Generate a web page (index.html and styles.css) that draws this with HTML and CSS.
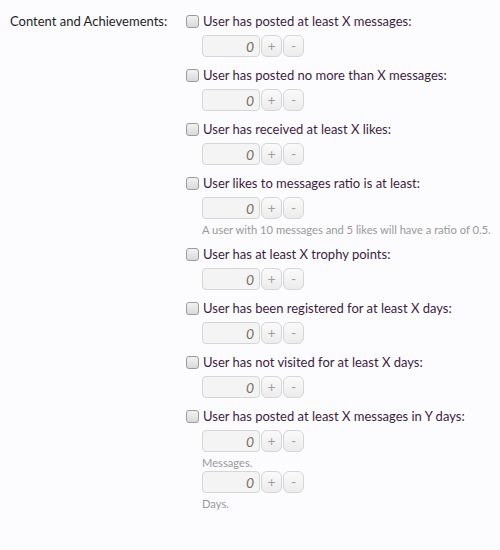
FILE: index.html
```html
<!DOCTYPE html>
<html>
<head>
<meta charset="utf-8">
<link rel="stylesheet" href="styles.css">
</head>
<body>
<div class="ctrl-unit">
  <div class="ctrl-label">Content and Achievements:</div>
  <ul class="options">
    <li class="option">
      <label class="check"><input type="checkbox"><span>User has posted at least X messages:</span></label>
      <div class="spinbox"><input class="num" type="text" value="0"><button class="spin">+</button><button class="spin">-</button></div>
    </li>
    <li class="option">
      <label class="check"><input type="checkbox"><span>User has posted no more than X messages:</span></label>
      <div class="spinbox"><input class="num" type="text" value="0"><button class="spin">+</button><button class="spin">-</button></div>
    </li>
    <li class="option">
      <label class="check"><input type="checkbox"><span>User has received at least X likes:</span></label>
      <div class="spinbox"><input class="num" type="text" value="0"><button class="spin">+</button><button class="spin">-</button></div>
    </li>
    <li class="option">
      <label class="check"><input type="checkbox"><span>User likes to messages ratio is at least:</span></label>
      <div class="spinbox"><input class="num" type="text" value="0"><button class="spin">+</button><button class="spin">-</button></div>
      <p class="hint">A user with 10 messages and 5 likes will have a ratio of 0.5.</p>
    </li>
    <li class="option">
      <label class="check"><input type="checkbox"><span>User has at least X trophy points:</span></label>
      <div class="spinbox"><input class="num" type="text" value="0"><button class="spin">+</button><button class="spin">-</button></div>
    </li>
    <li class="option">
      <label class="check"><input type="checkbox"><span>User has been registered for at least X days:</span></label>
      <div class="spinbox"><input class="num" type="text" value="0"><button class="spin">+</button><button class="spin">-</button></div>
    </li>
    <li class="option">
      <label class="check"><input type="checkbox"><span>User has not visited for at least X days:</span></label>
      <div class="spinbox"><input class="num" type="text" value="0"><button class="spin">+</button><button class="spin">-</button></div>
    </li>
    <li class="option">
      <label class="check"><input type="checkbox"><span>User has posted at least X messages in Y days:</span></label>
      <div class="spinbox"><input class="num" type="text" value="0"><button class="spin">+</button><button class="spin">-</button></div>
      <p class="hint tight">Messages.</p>
      <div class="spinbox"><input class="num" type="text" value="0"><button class="spin">+</button><button class="spin">-</button></div>
      <p class="hint">Days.</p>
    </li>
  </ul>
</div>
</body>
</html>
```

FILE: styles.css
```css
html, body {
  margin: 0;
  padding: 0;
  background: #fcfcff;
}
body {
  font-family: Lato, "Open Sans", sans-serif;
  font-size: 13px;
  color: #222;
}
.ctrl-unit {
  display: flex;
  padding: 12px 0 0 10px;
}
.ctrl-label {
  width: 176px;
  line-height: 18px;
  color: #1e1e1e;
  flex-shrink: 0;
}
.options {
  list-style: none;
  margin: 0;
  padding: 0;
}
.option {
  margin-bottom: 9px;
}
.check {
  display: flex;
  align-items: center;
  height: 18px;
  line-height: 18px;
  color: #3d1d40;
}
.check input {
  -webkit-appearance: none;
  appearance: none;
  box-sizing: border-box;
  margin: 0 4px 0 0;
  width: 13px;
  height: 13px;
  border: 1px solid #9c9c9c;
  border-radius: 3px;
  background: linear-gradient(#f2f2f2, #d9d9d9);
}
.spinbox {
  display: flex;
  margin: 5px 0 0 16px;
  height: 22px;
}
.num {
  box-sizing: border-box;
  width: 58px;
  height: 22px;
  margin: 0;
  padding: 0 5px;
  border: 1px solid #d6d6d6;
  border-radius: 4px;
  background: #f4f4f4;
  font-family: inherit;
  font-size: 14px;
  font-style: italic;
  color: #7a7060;
  text-align: right;
}
.spin {
  box-sizing: border-box;
  width: 21px;
  height: 22px;
  margin: 0 0 0 1px;
  padding: 0;
  border: 1px solid #d6d6d6;
  border-radius: 6px;
  background: linear-gradient(#fafafa, #ececec);
  font-family: inherit;
  font-size: 14px;
  color: #a0a0a0;
  line-height: 20px;
}
.hint {
  margin: 5px 0 0 16px;
  font-size: 11.2px;
  line-height: 12px;
  color: #999;
}
.hint.tight {
  margin-bottom: 2px;
}
.hint.tight + .spinbox {
  margin-top: 0;
}
```
